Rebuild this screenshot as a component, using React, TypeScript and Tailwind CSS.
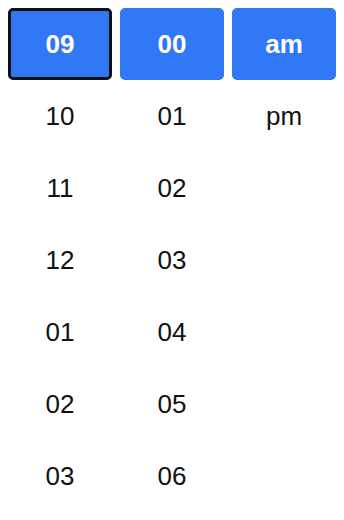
import { useState } from "react";

const hours = ["09", "10", "11", "12", "01", "02", "03"];
const minutes = ["00", "01", "02", "03", "04", "05", "06"];
const periods = ["am", "pm"];

function Column({
  items,
  value,
  focused,
  onPick,
}: {
  items: string[];
  value: string;
  focused?: boolean;
  onPick: (v: string) => void;
}) {
  return (
    <ul className="flex flex-1 flex-col">
      {items.map((item) => {
        const active = item === value;
        return (
          <li key={item}>
            <button
              type="button"
              onClick={() => onPick(item)}
              className={
                active
                  ? focused
                    ? "flex h-[72px] w-full items-center justify-center rounded-[5px] border-[3px] border-[#111] bg-[#3178f6] text-[26px] font-bold text-white"
                    : "flex h-[72px] w-full items-center justify-center rounded-[5px] bg-[#3178f6] text-[26px] font-bold text-white"
                  : "flex h-[72px] w-full items-center justify-center text-[26px] text-[#111]"
              }
            >
              {item}
            </button>
          </li>
        );
      })}
    </ul>
  );
}

export default function App() {
  const [hour, setHour] = useState("09");
  const [minute, setMinute] = useState("00");
  const [period, setPeriod] = useState("am");

  return (
    <div className="h-[520px] overflow-hidden bg-white font-['Liberation_Sans',Arial,sans-serif]">
      <div className="flex gap-2 p-2">
        <Column items={hours} value={hour} focused onPick={setHour} />
        <Column items={minutes} value={minute} onPick={setMinute} />
        <Column items={periods} value={period} onPick={setPeriod} />
      </div>
    </div>
  );
}
